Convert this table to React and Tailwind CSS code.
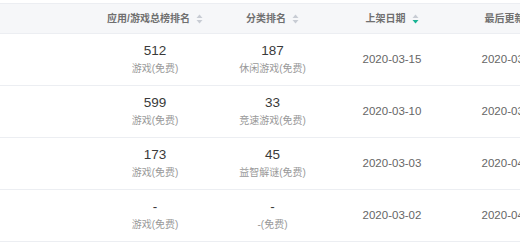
import React from "react";

const font = { fontFamily: '"Liberation Sans", Arial, "Noto Sans CJK SC", sans-serif' };

function Sort({ active }) {
  return (
    <svg width="7" height="10" viewBox="0 0 7 10" className="ml-[6px]">
      <path d="M3.5 0.5 L6.5 4 L0.5 4 Z" fill="#c8ccd4" />
      <path d="M3.5 9.5 L6.5 6 L0.5 6 Z" fill={active ? "#1ab394" : "#c8ccd4"} />
    </svg>
  );
}

const rows = [
  { rank: "512", cat1: "游戏(免费)", crank: "187", cat2: "休闲游戏(免费)", date: "2020-03-15", upd: "2020-03-15" },
  { rank: "599", cat1: "游戏(免费)", crank: "33", cat2: "竞速游戏(免费)", date: "2020-03-10", upd: "2020-03-10" },
  { rank: "173", cat1: "游戏(免费)", crank: "45", cat2: "益智解谜(免费)", date: "2020-03-03", upd: "2020-04-03" },
  { rank: "-", cat1: "游戏(免费)", crank: "-", cat2: "-(免费)", date: "2020-03-02", upd: "2020-04-02" },
];

function Cell({ top, bottom }) {
  return (
    <div className="flex flex-col items-center pb-[1px]">
      <div className="text-[13.5px] leading-[16px] text-[#3a3a3a]">{top}</div>
      <div className="text-[10px] leading-[14px] text-[#999] mt-[3px]">{bottom}</div>
    </div>
  );
}

export default function App() {
  return (
    <div className="w-[520px] h-[245px] bg-white overflow-hidden" style={font}>
      <div className="w-[600px] pt-[3px]">
        <div className="flex h-[31px] items-center bg-[#f6f7f9] border-t border-b border-[#eceef2] text-[10px] font-bold text-[#707070]">
          <div className="w-[96px]" />
          <div className="w-[118px] flex items-center justify-center">应用/游戏总榜排名<Sort /></div>
          <div className="w-[117px] flex items-center justify-center">分类排名<Sort /></div>
          <div className="w-[122px] flex items-center justify-center">上架日期<Sort active /></div>
          <div className="w-[116px] flex items-center justify-center">最后更新<Sort /></div>
        </div>
        {rows.map((r, i) => (
          <div key={i} className="flex h-[52px] items-center border-b border-[#eceef2]">
            <div className="w-[96px]" />
            <div className="w-[118px] flex justify-center"><Cell top={r.rank} bottom={r.cat1} /></div>
            <div className="w-[117px] flex justify-center"><Cell top={r.crank} bottom={r.cat2} /></div>
            <div className="w-[122px] flex justify-center text-[11.5px] text-[#666]">{r.date}</div>
            <div className="w-[116px] flex justify-center text-[11.5px] text-[#666]">{r.upd}</div>
          </div>
        ))}
      </div>
    </div>
  );
}
